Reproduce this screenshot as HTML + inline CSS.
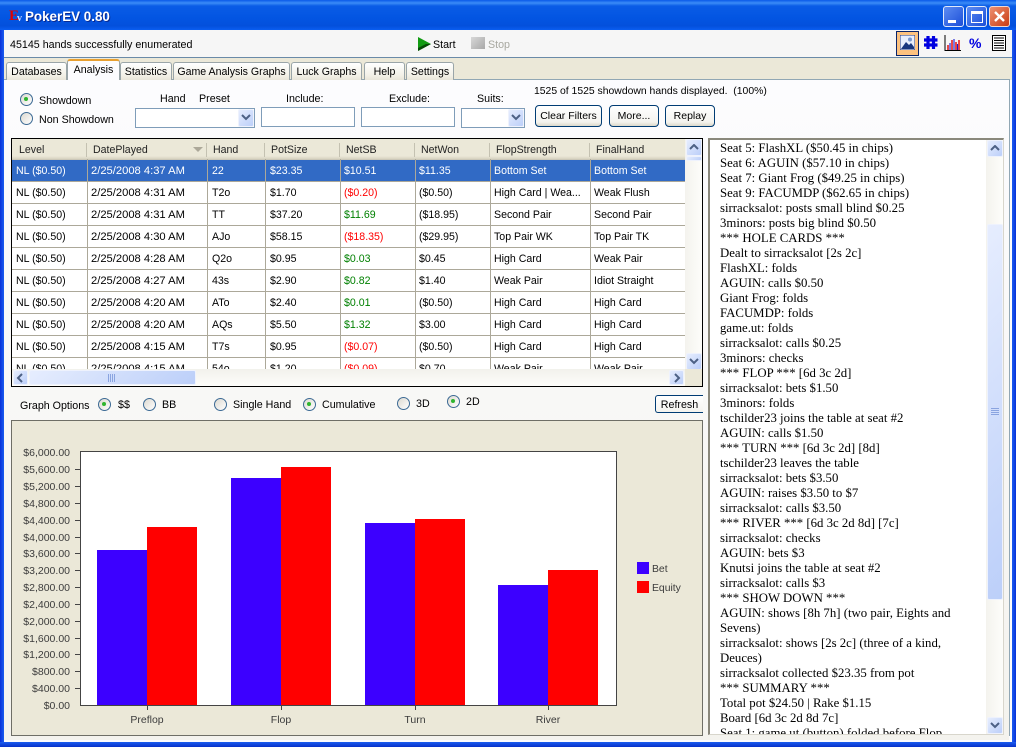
<!DOCTYPE html>
<html><head><meta charset="utf-8"><style>
html,body{margin:0;padding:0;width:1016px;height:747px;overflow:hidden;background:#0a3ad0}
*{box-sizing:border-box}
body{font-family:"Liberation Sans",sans-serif;font-size:10.7px;color:#000;position:relative}
.a,.t{position:absolute;white-space:nowrap}
.t{line-height:13px;margin-top:1px}
.tab{position:absolute;top:62px;height:18px;border:1px solid #9aa5a8;border-bottom:none;border-radius:3px 3px 0 0;background:linear-gradient(#fff,#f3f1e8 70%,#e8e5d8);text-align:center;line-height:18px;font-size:10.6px}
.radio{position:absolute;width:13px;height:13px;border-radius:50%;border:1.5px solid #3c6a94;background:linear-gradient(135deg,#dcd9d0,#fff)}
.radio.on::after{content:"";position:absolute;left:3px;top:3px;width:4px;height:4px;border-radius:50%;background:#2fb52f}
.in{position:absolute;height:20px;background:#fff;border:1px solid #7f9db9}
.btn{position:absolute;height:22px;border:1px solid #003c74;border-radius:4px;background:linear-gradient(#fff,#f4f3ee 80%,#dcd8ca);text-align:center;line-height:20px;font-size:10.5px}
.sb{position:absolute;width:16px;height:17px;background:linear-gradient(135deg,#e6edfe,#bccff9);border:1px solid #eef2fd;border-radius:2px}
.row{position:absolute;left:12px;width:673px;height:22px;border-bottom:1px solid #aca899;background:#fff;font-size:10.6px}
.row span{position:absolute;top:3px;line-height:17px;white-space:nowrap}
.row span.d{font-size:11.2px}
.vl{position:absolute;top:159px;height:210px;width:1px;background:#aca899}
.hd{position:absolute;top:144px;line-height:13px;color:#222;font-size:10.6px}
.hs{position:absolute;top:143px;width:1px;height:14px;background:#c4c1b1}
.r{color:#f00}.g{color:#008000}
#log{position:absolute;left:720px;top:142px;font-family:"Liberation Serif",serif;font-size:12.8px;line-height:15px;color:#000;white-space:nowrap}
.yl{position:absolute;left:11px;width:59px;text-align:right;font-size:10.5px;line-height:12px;color:#3c3c3c}
.yt{position:absolute;left:75px;width:5px;height:1px;background:#444}
.xl{position:absolute;top:714px;width:80px;text-align:center;color:#3c3c3c;line-height:12px;font-size:10.5px}
.xt{position:absolute;top:705px;width:1px;height:5px;background:#444}
</style></head><body>
<!-- title bar -->
<div class="a" style="left:0;top:0;width:1016px;height:30px;background:linear-gradient(#0a5ae8 0,#3b8cf7 3px,#0a5ce6 6px,#0355e2 18px,#0350dc 26px,#0a5ef0 30px)"></div>
<div class="a" style="left:9px;top:9px;width:14px;height:14px;color:#e00000;font:bold 15px/14px 'Liberation Serif',serif">E<span style="position:absolute;left:8px;top:5px;font-size:10px;line-height:9px;color:#cfdcff">v</span></div>
<div class="a" style="left:25px;top:9px;font:bold 13.4px/16px 'Liberation Sans',sans-serif;color:#fff;text-shadow:1px 1px 0 #0a2a90">PokerEV 0.80</div>
<div class="a" style="left:943px;top:6px;width:21px;height:21px;border:1px solid #dfe9fb;border-radius:3px;background:linear-gradient(135deg,#5c8cf2,#1b4ed8)"><div class="a" style="left:4px;top:13px;width:8px;height:3px;background:#fff"></div></div>
<div class="a" style="left:966px;top:6px;width:21px;height:21px;border:1px solid #dfe9fb;border-radius:3px;background:linear-gradient(135deg,#5c8cf2,#1b4ed8)"><div class="a" style="left:4px;top:4px;width:12px;height:12px;border:1px solid #fff;border-top-width:3px"></div></div>
<div class="a" style="left:989px;top:6px;width:21px;height:21px;border:1px solid #f0d8d0;border-radius:3px;background:linear-gradient(135deg,#ee9070,#c83c14)"><svg class="a" style="left:3px;top:3px" width="13" height="13"><path d="M2 2L11 11M11 2L2 11" stroke="#fff" stroke-width="2.4"/></svg></div>
<!-- window body -->
<div class="a" style="left:4px;top:30px;width:1008px;height:712px;background:#fcfcfe"></div>
<div class="a" style="left:0;top:30px;width:4px;height:717px;background:linear-gradient(90deg,#0831d9,#1a5cf0)"></div>
<div class="a" style="right:0;top:30px;width:4px;height:717px;background:linear-gradient(90deg,#1a5cf0,#0831d9)"></div>
<div class="a" style="left:0;top:742px;width:1016px;height:5px;background:linear-gradient(#1a5cf0,#0831c9)"></div>
<!-- toolbar -->
<div class="a" style="left:4px;top:30px;width:1008px;height:28px;background:#f6f6f6;border-bottom:1px solid #6a8aa8"></div>
<div class="t" style="left:10px;top:38px">45145 hands successfully enumerated</div>
<svg class="a" style="left:417px;top:36px" width="15" height="16"><path d="M1 1L14 8L1 15Z" fill="#129b12"/><path d="M1 15L14 8L9 8L1 12Z" fill="#064a06"/></svg>
<div class="t" style="left:433px;top:38px">Start</div>
<div class="a" style="left:471px;top:37px;width:14px;height:12px;background:linear-gradient(135deg,#d8d8d8,#a8a8a8)"></div>
<div class="t" style="left:488px;top:38px;color:#a8a8a0">Stop</div>
<div class="a" style="left:896px;top:31px;width:23px;height:25px;border:1px solid #0a246a;background:#fdc27f"></div>
<svg class="a" style="left:900px;top:35px" width="15" height="15"><rect width="15" height="15" fill="#e8eefc" stroke="#223a80"/><path d="M1 14L6 7L9 10L11 8L14 12V14Z" fill="#18367e"/><circle cx="10" cy="4.5" r="2" fill="#7a98cc"/></svg>
<svg class="a" style="left:923px;top:35px" width="15" height="15"><path d="M5 1V14M10.500 1V14M1 5H14.500M1 10H14.500" stroke="#0000e0" stroke-width="3.2"/></svg>
<svg class="a" style="left:944px;top:35px" width="18" height="16"><path d="M1 0V15.5H17" stroke="#000" fill="none"/><path d="M4 15V10M8 15V5M12 15V7M15 15V5" stroke="#e00000" stroke-width="1.4"/><path d="M6 15V8M10 15V4M13.500 15V9" stroke="#1818d0" stroke-width="1.1"/></svg>
<div class="a" style="left:969px;top:35px;font:bold 14px/16px 'Liberation Sans',sans-serif;color:#0000e0">%</div>
<svg class="a" style="left:992px;top:35px" width="14" height="16"><rect x=".5" y=".5" width="13" height="15" fill="#fff" stroke="#000"/><path d="M2 3H12M2 5.500H12M2 8H12M2 10.500H12M2 13H12" stroke="#000" stroke-width="1.1"/></svg>
<!-- tab strip -->
<div class="a" style="left:4px;top:58px;width:1008px;height:22px;background:#ebe8d8"></div>
<div class="a" style="left:4px;top:79px;width:1006px;height:1px;background:#91a7b4"></div>
<div class="a" style="left:1009px;top:79px;width:1px;height:657px;background:#91a7b4"></div>
<div class="a" style="left:4px;top:80px;width:1005px;height:660px;background:linear-gradient(#fcfcfe,#f4f3ee)"></div>
<div class="tab" style="left:6px;width:61px">Databases</div>
<div class="tab" style="left:120px;width:52px">Statistics</div>
<div class="tab" style="left:173px;width:117px">Game Analysis Graphs</div>
<div class="tab" style="left:291px;width:71px">Luck Graphs</div>
<div class="tab" style="left:364px;width:41px">Help</div>
<div class="tab" style="left:406px;width:48px">Settings</div>
<div class="a" style="left:67px;top:59px;width:53px;height:21px;background:#fcfcfe;border:1px solid #9aa5a8;border-top:2px solid #e8a030;border-bottom:none;border-radius:3px 3px 0 0;text-align:center;line-height:18px">Analysis</div>
<!-- filters -->
<div class="radio on" style="left:20px;top:93px"></div><div class="t" style="left:39px;top:94px">Showdown</div>
<div class="radio" style="left:20px;top:112px"></div><div class="t" style="left:39px;top:113px">Non Showdown</div>
<div class="t" style="left:160px;top:92px">Hand</div><div class="t" style="left:199px;top:92px">Preset</div>
<div class="t" style="left:286px;top:92px">Include:</div><div class="t" style="left:389px;top:92px">Exclude:</div><div class="t" style="left:477px;top:92px">Suits:</div>
<div class="in" style="left:135px;top:108px;width:120px"></div>
<div class="in" style="left:261px;top:107px;width:94px"></div>
<div class="in" style="left:361px;top:107px;width:94px"></div>
<div class="in" style="left:461px;top:108px;width:64px"></div>
<div class="sb" style="left:238px;top:109px;height:18px"></div>
<div class="sb" style="left:508px;top:109px;height:18px"></div>
<svg class="a" style="left:241px;top:114px" width="10" height="8"><path d="M1 1L5 5L9 1" fill="none" stroke="#4d6185" stroke-width="2"/></svg>
<svg class="a" style="left:511px;top:114px" width="10" height="8"><path d="M1 1L5 5L9 1" fill="none" stroke="#4d6185" stroke-width="2"/></svg>
<div class="t" style="left:534px;top:84px;font-size:10.4px">1525 of 1525 showdown hands displayed.&nbsp; (100%)</div>
<div class="btn" style="left:535px;top:105px;width:67px">Clear Filters</div>
<div class="btn" style="left:609px;top:105px;width:50px">More...</div>
<div class="btn" style="left:665px;top:105px;width:50px">Replay</div>
<!-- grid -->
<div class="a" style="left:11px;top:138px;width:692px;height:249px;border:1px solid #000;background:#fff"></div>
<div class="a" style="left:12px;top:139px;width:673px;height:21px;background:linear-gradient(#ebe8d8 85%,#d6d2c0);border-bottom:1px solid #cbc7b8"></div>
<div class="hd" style="left:19px">Level</div><div class="hd" style="left:93px">DatePlayed</div><div class="hd" style="left:213px">Hand</div><div class="hd" style="left:271px">PotSize</div><div class="hd" style="left:346px">NetSB</div><div class="hd" style="left:421px">NetWon</div><div class="hd" style="left:496px">FlopStrength</div><div class="hd" style="left:596px">FinalHand</div>
<div class="hs" style="left:86px"></div><div class="hs" style="left:206px"></div><div class="hs" style="left:264px"></div><div class="hs" style="left:339px"></div><div class="hs" style="left:414px"></div><div class="hs" style="left:489px"></div><div class="hs" style="left:589px"></div>
<svg class="a" style="left:193px;top:147px" width="10" height="6"><path d="M0 0H10L5 5Z" fill="#aca899"/></svg>
<div class="row" style="top:160px;background:#316ac5;color:#fff"><span style="left:4px">NL ($0.50)</span><span class="d" style="left:79px">2/25/2008 4:37 AM</span><span style="left:200px">22</span><span style="left:258px">$23.35</span><span style="left:332px">$10.51</span><span style="left:407px">$11.35</span><span style="left:482px">Bottom Set</span><span style="left:582px">Bottom Set</span></div>
<div class="row" style="top:182px"><span style="left:4px">NL ($0.50)</span><span class="d" style="left:79px">2/25/2008 4:31 AM</span><span style="left:200px">T2o</span><span style="left:258px">$1.70</span><span class="r" style="left:332px">($0.20)</span><span style="left:407px">($0.50)</span><span style="left:482px">High Card | Wea...</span><span style="left:582px">Weak Flush</span></div>
<div class="row" style="top:204px"><span style="left:4px">NL ($0.50)</span><span class="d" style="left:79px">2/25/2008 4:31 AM</span><span style="left:200px">TT</span><span style="left:258px">$37.20</span><span class="g" style="left:332px">$11.69</span><span style="left:407px">($18.95)</span><span style="left:482px">Second Pair</span><span style="left:582px">Second Pair</span></div>
<div class="row" style="top:226px"><span style="left:4px">NL ($0.50)</span><span class="d" style="left:79px">2/25/2008 4:30 AM</span><span style="left:200px">AJo</span><span style="left:258px">$58.15</span><span class="r" style="left:332px">($18.35)</span><span style="left:407px">($29.95)</span><span style="left:482px">Top Pair WK</span><span style="left:582px">Top Pair TK</span></div>
<div class="row" style="top:248px"><span style="left:4px">NL ($0.50)</span><span class="d" style="left:79px">2/25/2008 4:28 AM</span><span style="left:200px">Q2o</span><span style="left:258px">$0.95</span><span class="g" style="left:332px">$0.03</span><span style="left:407px">$0.45</span><span style="left:482px">High Card</span><span style="left:582px">Weak Pair</span></div>
<div class="row" style="top:270px"><span style="left:4px">NL ($0.50)</span><span class="d" style="left:79px">2/25/2008 4:27 AM</span><span style="left:200px">43s</span><span style="left:258px">$2.90</span><span class="g" style="left:332px">$0.82</span><span style="left:407px">$1.40</span><span style="left:482px">Weak Pair</span><span style="left:582px">Idiot Straight</span></div>
<div class="row" style="top:292px"><span style="left:4px">NL ($0.50)</span><span class="d" style="left:79px">2/25/2008 4:20 AM</span><span style="left:200px">ATo</span><span style="left:258px">$2.40</span><span class="g" style="left:332px">$0.01</span><span style="left:407px">($0.50)</span><span style="left:482px">High Card</span><span style="left:582px">High Card</span></div>
<div class="row" style="top:314px"><span style="left:4px">NL ($0.50)</span><span class="d" style="left:79px">2/25/2008 4:20 AM</span><span style="left:200px">AQs</span><span style="left:258px">$5.50</span><span class="g" style="left:332px">$1.32</span><span style="left:407px">$3.00</span><span style="left:482px">High Card</span><span style="left:582px">High Card</span></div>
<div class="row" style="top:336px"><span style="left:4px">NL ($0.50)</span><span class="d" style="left:79px">2/25/2008 4:15 AM</span><span style="left:200px">T7s</span><span style="left:258px">$0.95</span><span class="r" style="left:332px">($0.07)</span><span style="left:407px">($0.50)</span><span style="left:482px">High Card</span><span style="left:582px">High Card</span></div>
<div class="row" style="top:358px;height:11px;overflow:hidden;border:none"><span style="left:4px">NL ($0.50)</span><span class="d" style="left:79px">2/25/2008 4:15 AM</span><span style="left:200px">54o</span><span style="left:258px">$1.20</span><span class="r" style="left:332px">($0.09)</span><span style="left:407px">$0.70</span><span style="left:482px">Weak Pair</span><span style="left:582px">Weak Pair</span></div>
<div class="vl" style="left:87px"></div><div class="vl" style="left:207px"></div><div class="vl" style="left:265px"></div><div class="vl" style="left:340px"></div><div class="vl" style="left:415px"></div><div class="vl" style="left:490px"></div><div class="vl" style="left:590px"></div>
<div class="a" style="left:685px;top:139px;width:17px;height:230px;background:linear-gradient(90deg,#f4f3ee,#fdfdfa)"></div>
<div class="sb" style="left:686px;top:139px"></div><div class="sb" style="left:686px;top:156px;height:5px"></div>
<div class="sb" style="left:686px;top:353px"></div>
<svg class="a" style="left:689px;top:144px" width="10" height="7"><path d="M1 5L5 1L9 5" fill="none" stroke="#4d6185" stroke-width="2"/></svg>
<svg class="a" style="left:689px;top:358px" width="10" height="7"><path d="M1 1L5 5L9 1" fill="none" stroke="#4d6185" stroke-width="2"/></svg>
<div class="a" style="left:12px;top:369px;width:690px;height:17px;background:linear-gradient(#f2f1ec,#fdfdfa)"></div>
<div class="a" style="left:685px;top:369px;width:17px;height:17px;background:#ebe8d8"></div>
<div class="sb" style="left:13px;top:370px;width:15px;height:15px"></div>
<div class="sb" style="left:29px;top:370px;width:167px;height:15px"></div>
<div class="sb" style="left:669px;top:370px;width:15px;height:15px"></div>
<svg class="a" style="left:16px;top:373px" width="8" height="10"><path d="M6 1L2 5L6 9" fill="none" stroke="#4d6185" stroke-width="2"/></svg>
<svg class="a" style="left:673px;top:373px" width="8" height="10"><path d="M2 1L6 5L2 9" fill="none" stroke="#4d6185" stroke-width="2"/></svg>
<svg class="a" style="left:108px;top:374px" width="8" height="8"><path d="M.5 0V8M2.500 0V8M4.500 0V8M6.500 0V8" stroke="#8aa4e0"/></svg>
<!-- graph options -->
<div class="t" style="left:20px;top:399px">Graph Options</div>
<div class="radio on" style="left:98px;top:398px"></div><div class="t" style="left:118px;top:398px">$$</div>
<div class="radio" style="left:143px;top:398px"></div><div class="t" style="left:162px;top:398px">BB</div>
<div class="radio" style="left:214px;top:398px"></div><div class="t" style="left:233px;top:398px">Single Hand</div>
<div class="radio on" style="left:303px;top:398px"></div><div class="t" style="left:322px;top:398px">Cumulative</div>
<div class="radio" style="left:397px;top:397px"></div><div class="t" style="left:416px;top:397px">3D</div>
<div class="radio on" style="left:447px;top:395px"></div><div class="t" style="left:466px;top:395px">2D</div>
<div class="a" style="left:655px;top:395px;width:48px;height:18px;border:1px solid #003c74;border-right:none;border-radius:3px 0 0 3px;background:linear-gradient(#fff,#f4f3ee);text-align:center;line-height:18px">Refresh</div>
<!-- chart -->
<div class="a" style="left:11px;top:420px;width:692px;height:316px;background:#ebe8d8;border:1px solid #6e6e66"></div>
<div class="a" style="left:80px;top:451px;width:537px;height:255px;background:#fff;border:1px solid #444"></div>
<div class="a" style="left:97px;top:550px;width:50px;height:155px;background:#3c00ff"></div><div class="a" style="left:147px;top:527px;width:50px;height:178px;background:#f00"></div>
<div class="a" style="left:231px;top:478px;width:50px;height:227px;background:#3c00ff"></div><div class="a" style="left:281px;top:467px;width:50px;height:238px;background:#f00"></div>
<div class="a" style="left:365px;top:523px;width:50px;height:182px;background:#3c00ff"></div><div class="a" style="left:415px;top:519px;width:50px;height:186px;background:#f00"></div>
<div class="a" style="left:498px;top:585px;width:50px;height:120px;background:#3c00ff"></div><div class="a" style="left:548px;top:570px;width:50px;height:135px;background:#f00"></div>
<div class="yl" style="top:447px">$6,000.00</div>
<div class="yl" style="top:464px">$5,600.00</div><div class="yt" style="top:469px"></div>
<div class="yl" style="top:481px">$5,200.00</div><div class="yt" style="top:486px"></div>
<div class="yl" style="top:498px">$4,800.00</div><div class="yt" style="top:503px"></div>
<div class="yl" style="top:515px">$4,400.00</div><div class="yt" style="top:520px"></div>
<div class="yl" style="top:532px">$4,000.00</div><div class="yt" style="top:537px"></div>
<div class="yl" style="top:548px">$3,600.00</div><div class="yt" style="top:553px"></div>
<div class="yl" style="top:565px">$3,200.00</div><div class="yt" style="top:570px"></div>
<div class="yl" style="top:582px">$2,800.00</div><div class="yt" style="top:587px"></div>
<div class="yl" style="top:599px">$2,400.00</div><div class="yt" style="top:604px"></div>
<div class="yl" style="top:616px">$2,000.00</div><div class="yt" style="top:621px"></div>
<div class="yl" style="top:633px">$1,600.00</div><div class="yt" style="top:638px"></div>
<div class="yl" style="top:649px">$1,200.00</div><div class="yt" style="top:654px"></div>
<div class="yl" style="top:666px">$800.00</div><div class="yt" style="top:671px"></div>
<div class="yl" style="top:683px">$400.00</div><div class="yt" style="top:688px"></div>
<div class="yl" style="top:700px">$0.00</div>
<div class="xt" style="left:147px"></div><div class="xt" style="left:281px"></div><div class="xt" style="left:415px"></div><div class="xt" style="left:548px"></div>
<div class="xl" style="left:107px">Preflop</div><div class="xl" style="left:241px">Flop</div><div class="xl" style="left:375px">Turn</div><div class="xl" style="left:508px">River</div>
<div class="a" style="left:637px;top:562px;width:12px;height:12px;background:#3c00ff"></div><div class="t" style="left:652px;top:562px;color:#3c3c3c;font-size:10.4px">Bet</div>
<div class="a" style="left:637px;top:581px;width:12px;height:12px;background:#f00"></div><div class="t" style="left:652px;top:581px;color:#3c3c3c;font-size:10.4px">Equity</div>
<!-- log -->
<div class="a" style="left:708px;top:138px;width:296px;height:597px;background:#fff;border:1px solid #8a887c;border-bottom-color:#d8d6cc;border-right-color:#d8d6cc;border-top-width:2px;border-left-width:2px;overflow:hidden"></div>
<div class="a" style="left:710px;top:140px;width:276px;height:594px;overflow:hidden"><div id="log" style="left:10px;top:1px">Seat 5: FlashXL ($50.45 in chips)<br>Seat 6: AGUIN ($57.10 in chips)<br>Seat 7: Giant Frog ($49.25 in chips)<br>Seat 9: FACUMDP ($62.65 in chips)<br>sirracksalot: posts small blind $0.25<br>3minors: posts big blind $0.50<br>*** HOLE CARDS ***<br>Dealt to sirracksalot [2s 2c]<br>FlashXL: folds<br>AGUIN: calls $0.50<br>Giant Frog: folds<br>FACUMDP: folds<br>game.ut: folds<br>sirracksalot: calls $0.25<br>3minors: checks<br>*** FLOP *** [6d 3c 2d]<br>sirracksalot: bets $1.50<br>3minors: folds<br>tschilder23 joins the table at seat #2<br>AGUIN: calls $1.50<br>*** TURN *** [6d 3c 2d] [8d]<br>tschilder23 leaves the table<br>sirracksalot: bets $3.50<br>AGUIN: raises $3.50 to $7<br>sirracksalot: calls $3.50<br>*** RIVER *** [6d 3c 2d 8d] [7c]<br>sirracksalot: checks<br>AGUIN: bets $3<br>Knutsi joins the table at seat #2<br>sirracksalot: calls $3<br>*** SHOW DOWN ***<br>AGUIN: shows [8h 7h] (two pair, Eights and<br>Sevens)<br>sirracksalot: shows [2s 2c] (three of a kind,<br>Deuces)<br>sirracksalot collected $23.35 from pot<br>*** SUMMARY ***<br>Total pot $24.50 | Rake $1.15<br>Board [6d 3c 2d 8d 7c]<br>Seat 1: game.ut (button) folded before Flop</div></div>
<div class="a" style="left:986px;top:140px;width:17px;height:594px;background:linear-gradient(90deg,#f4f3ee,#fdfdfa)"></div>
<div class="sb" style="left:987px;top:140px"></div><div class="sb" style="left:987px;top:224px;height:376px"></div><div class="sb" style="left:987px;top:717px"></div>
<svg class="a" style="left:990px;top:145px" width="10" height="7"><path d="M1 5L5 1L9 5" fill="none" stroke="#4d6185" stroke-width="2"/></svg>
<svg class="a" style="left:990px;top:722px" width="10" height="7"><path d="M1 1L5 5L9 1" fill="none" stroke="#4d6185" stroke-width="2"/></svg>
<svg class="a" style="left:991px;top:408px" width="8" height="8"><path d="M0 .5H8M0 2.500H8M0 4.500H8M0 6.500H8" stroke="#8aa4e0"/></svg>
</body></html>
